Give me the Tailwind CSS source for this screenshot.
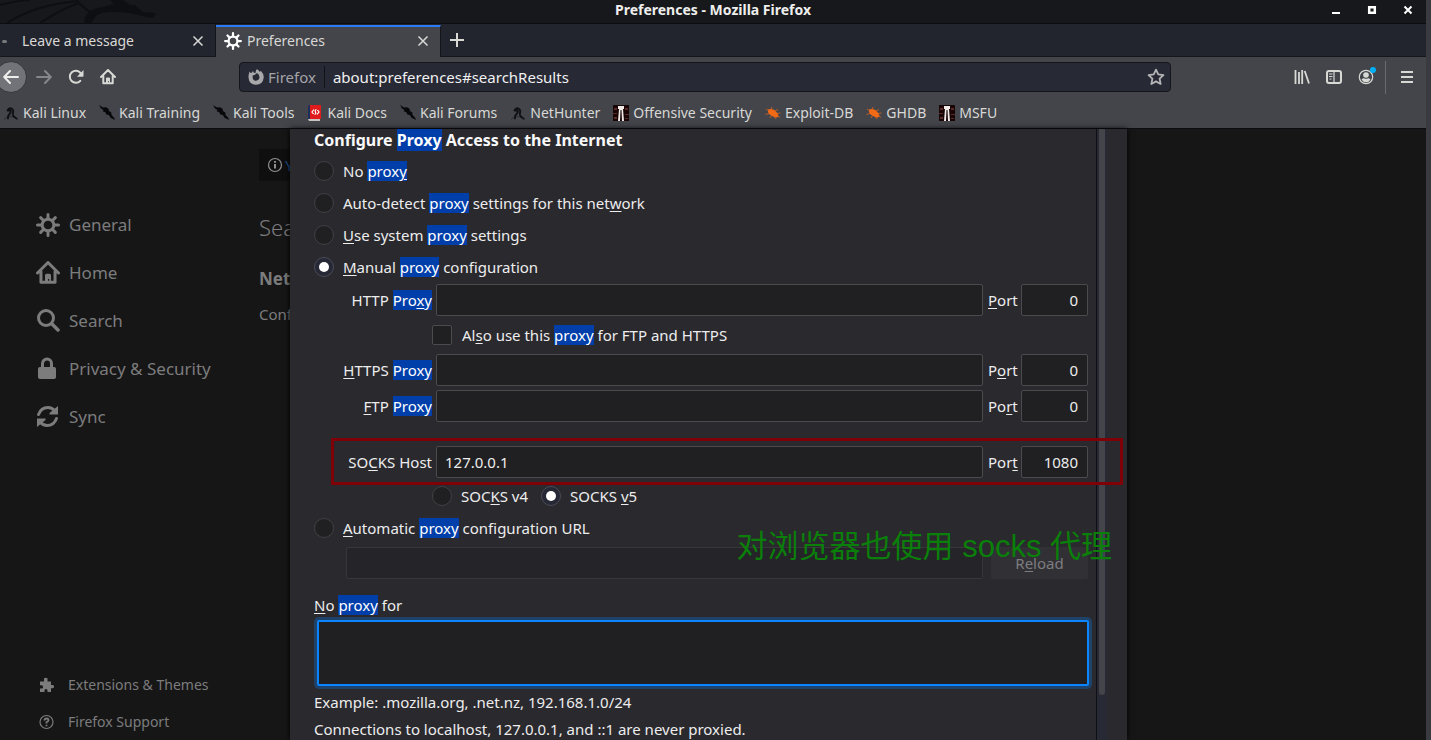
<!DOCTYPE html>
<html lang="en">
<head>
<meta charset="utf-8">
<title>Preferences - Mozilla Firefox</title>
<script src="https://cdn.jsdelivr.net/npm/@tailwindcss/browser@4"></script>
</head>
<body class="bg-[#161617]">
<svg class="hidden">
  <symbol id="gear" viewBox="0 0 16 16"><g fill="none" stroke="currentColor" stroke-linecap="round"><circle cx="8" cy="8" r="3.900" stroke-width="2"/><path stroke-width="2" d="M8 3.500V1M8 12.500V15M3.500 8H1M12.500 8H15M4.800 4.800L3.100 3.100M11.200 11.200l1.700 1.700M4.800 11.200l-1.700 1.700M11.200 4.800l1.700-1.700"/></g></symbol>
  <symbol id="home" viewBox="0 0 16 16"><path fill="none" stroke="currentColor" stroke-width="2" stroke-linecap="round" stroke-linejoin="round" d="M1 8l7-7 7 7M3.300 7v7.200h9.400V7"/><path fill="currentColor" d="M6 14V9.500a1 1 0 0 1 1-1h2a1 1 0 0 1 1 1V14H8.800v-2H8v2z"/></symbol>
  <symbol id="dragon" viewBox="0 0 16 16"><path fill="#08080a" d="M0 0l4 2.500 3-.3 2.500 1.600.5 2.200 2.300 1.500.3 2.500 2.400 2.500L16 15l-2.500-1.200-2-1-1.700-2.800-2.500-.5-1-2.300-2.600-1L4.500 5 2 3.500z"/></symbol>
  <symbol id="kali" viewBox="0 0 16 16"><path fill="none" stroke="#2b2d32" d="M1 14.500Q4 11 8 11.500t7 3"/><path fill="none" stroke="#0f1013" stroke-width="1.800" stroke-linecap="round" d="M4.500 5.500Q6 2.500 8.500 3.500q2.500 1.500 1.500 4.500t3.500 5.500M5 5.500l2.500 0Q8.500 7 6.500 9T5 13.500"/></symbol>
  <symbol id="offsec" viewBox="0 0 16 16"><path fill="#180606" d="M0 0h16v16H0z"/><path fill="#5b2925" d="M1 3h3v2H1zM12 3h3v2h-3zM0 8h4v1H0zM12 9h4v1h-4zM1 12h3v2H1zM12 13h3v1h-3z"/><path fill="#f0eae7" d="M5 1h6v3h-1l1 12H9L8.500 5h-1L7 16H5l1-12H5z"/></symbol>
  <symbol id="bug" viewBox="0 0 16 16"><path fill="#f26a16" d="M3 4.500L5.500 4l3 .5 2 1.500 2 2.200 1 2.800-1.500 1.500-2.500-.2L7 11 4.500 9.500 3 7z"/><path fill="none" stroke="#d9641c" stroke-width=".8" d="M4 6L1 4M6 4.500L7 2M4 8.500l-3.500 1M6.500 10.500L5 13M10 6l3-1.500M12 8.500l3.500-.5M9.500 12l1.500 2M13 11l2 1.500"/></symbol>
  <symbol id="close" viewBox="0 0 12 12"><path fill="none" stroke="currentColor" stroke-width="1.500" d="M1.500 1.500l9 9M10.500 1.500l-9 9"/></symbol>
</svg>

<div class="relative flex h-screen flex-col overflow-hidden border-r-[5px] border-[#3a3b41] font-['Noto_Sans',sans-serif] text-[14px] leading-5 text-[#d8d8d5]">

  <!-- Title bar -->
  <header class="relative h-6 shrink-0 border-b border-[#0c0d10] bg-[#17181c]">
    <svg class="absolute top-0 left-0 h-[23px] w-[156px]" viewBox="0 0 156 23" fill="none" stroke="#0e0f12" stroke-width="2"><path d="M7 23Q35 5 78 1M40 23Q65 7 80 3M0 5Q20 0 30 0M76 0Q84 8 90 12"/><path fill="#0e0f12" stroke="none" d="M84 23Q85 10 98 8Q108 6 114 4L110 0h13l7 5 5 0 8 7 13 1-3 5-11-2-12-3-16-1Q95 11 92 23z"/></svg>
    <h1 class="text-center font-bold text-[#eeeeec]">Preferences - Mozilla Firefox</h1>
    <div class="absolute top-0 right-3 flex h-[19px] items-center gap-6 text-white">
      <button aria-label="Minimize" class="size-3"><svg class="size-3" viewBox="0 0 12 12"><path fill="currentColor" d="M2 8h8v2H2z"/></svg></button>
      <button aria-label="Maximize" class="size-3"><svg class="size-3" viewBox="0 0 12 12"><path fill="none" stroke="currentColor" stroke-width="2.500" d="M3.200 3.200h5.600v5.600H3.200z"/></svg></button>
      <button aria-label="Close" class="size-3"><svg class="size-3" viewBox="0 0 12 12"><path fill="none" stroke="currentColor" stroke-width="2" d="M2.500 2.500l7 7M9.500 2.500l-7 7"/></svg></button>
    </div>
  </header>

  <!-- Tabs -->
  <nav class="flex h-[33px] shrink-0 border-b border-[#15161b] bg-[#23252e]">
    <div class="flex w-[216px] items-center border-r border-[#15161b] pt-[2px] pr-[11px] pl-[2px]">
      <span class="h-[3px] w-[5px] rounded-full bg-[#77787c]"></span>
      <span class="ml-[15px] flex-1">Leave a message</span>
      <button aria-label="Close tab"><svg class="size-3"><use href="#close"/></svg></button>
    </div>
    <div class="mt-px -mb-px flex w-[225px] items-center border-t-2 border-r border-t-[#2a7bf5] border-r-[#15161b] bg-[#43454b] pr-[11px] pb-[2px] pl-2">
      <svg class="size-[18px] text-white"><use href="#gear"/></svg>
      <span class="ml-[5px] flex-1">Preferences</span>
      <button aria-label="Close tab"><svg class="size-3"><use href="#close"/></svg></button>
    </div>
    <button aria-label="New tab" class="px-2"><svg class="size-4" viewBox="0 0 16 16"><path fill="none" stroke="currentColor" stroke-width="2" d="M8 1v14M1 8h14"/></svg></button>
  </nav>

  <!-- Toolbar -->
  <div class="flex h-10 shrink-0 items-center bg-[#43454b]">
    <button aria-label="Back" class="-ml-[5px] grid size-8 shrink-0 place-items-center rounded-full border border-[#34353a] bg-[#727378] text-[#eeeeec]"><svg class="size-4" viewBox="0 0 16 16" fill="none" stroke="currentColor" stroke-width="2" stroke-linecap="round" stroke-linejoin="round"><path d="M15 8H1.500M7 2L1.200 8 7 14"/></svg></button>
    <button aria-label="Forward" class="ml-[9px] text-[#85868a]"><svg class="size-4" viewBox="0 0 16 16" fill="none" stroke="currentColor" stroke-width="2" stroke-linecap="round" stroke-linejoin="round"><path d="M1 8h13.500M9 2l5.800 6L9 14"/></svg></button>
    <button aria-label="Reload" class="ml-4"><svg class="size-4" viewBox="0 0 16 16"><path fill="none" stroke="currentColor" stroke-width="2" stroke-linecap="round" d="M12.300 11.800A6 6 0 1 1 12.500 4"/><path fill="currentColor" d="M15.500 1v6a.7.700 0 0 1-.7.700H9z"/></svg></button>
    <button aria-label="Home" class="ml-4"><svg class="size-4"><use href="#home"/></svg></button>
    <div class="ml-[123px] flex h-[30px] w-[932px] min-w-0 items-center rounded-[4px] border border-[#15161b] bg-[#272935] px-2 text-[15px]">
      <svg class="size-4 shrink-0" viewBox="0 0 16 16"><path fill="#a9a9ac" fill-rule="evenodd" d="M1.500 2.500Q2.500 4 3.500 4L5 2l1 2 2-.500Q7 2 9 .300q2 .500 2.500 2.500l1.500-.800Q16 5 15.700 8.500 15 15.500 8 15.800 1 15.500.500 8.500q0-3 1-6zM9 4Q7 6 4.700 6.500 4 11.500 8 11.700q3.500-.500 3.500-3.700Q11 5 9 4z"/></svg>
      <span class="ml-1 text-[#a4a4a8]">Firefox</span>
      <span class="mx-2 h-[22px] w-px bg-[#111217]"></span>
      <input aria-label="Address" class="min-w-0 flex-1 bg-transparent text-[#f0f0f0] outline-none" value="about:preferences#searchResults">
      <button aria-label="Bookmark this page" class="-mr-[3px] text-[#b4b4b7]"><svg class="size-[18px]" viewBox="0 0 16 16"><path fill="none" stroke="currentColor" stroke-width="1.600" stroke-linejoin="round" d="M8 1.500l2 4.200 4.600.6-3.400 3.200.9 4.700L8 11.900l-4.100 2.300.9-4.700L1.400 6.300 6 5.700z"/></svg></button>
    </div>
    <div class="ml-auto flex items-center pr-[11px]">
      <button aria-label="Library"><svg class="size-4" viewBox="0 0 16 16" fill="none" stroke="currentColor" stroke-width="1.800"><path d="M1.500 1v14M5 3v12M8.200 1v14M10.700 2l4.300 12.500"/></svg></button>
      <button aria-label="Sidebars" class="ml-4"><svg class="size-4" viewBox="0 0 16 16" fill="none" stroke="currentColor"><rect x="1" y="2" width="14" height="12" rx="2" stroke-width="2"/><path stroke-width="1.200" d="M8 2v12M3 5h3.500M3 7.500h3.500M3.500 10h2"/></svg></button>
      <button aria-label="Account" class="relative ml-4"><svg class="size-4" viewBox="0 0 16 16"><circle cx="8" cy="8" r="6.700" fill="none" stroke="currentColor" stroke-width="1.200"/><circle cx="8" cy="6" r="2.800" fill="currentColor"/><path fill="currentColor" d="M3.500 10.500Q5 9 6 9.200q2 1 4 0 1-.200 2.500 1.300Q11 13.200 8 13.200t-4.500-2.700z"/></svg><span class="absolute -top-[2px] -right-[2px] size-[6px] rounded-full bg-[#00b0f4]"></span></button>
      <span class="mx-[11px] h-[33px] w-px bg-[#696a6f]"></span>
      <button aria-label="Menu" class="ml-[2px]"><svg class="size-4" viewBox="0 0 16 16"><path fill="currentColor" d="M2 2h12v2H2zM2 7h12v2H2zM2 12h12v2H2z"/></svg></button>
    </div>
  </div>

  <!-- Bookmarks -->
  <nav class="flex h-8 shrink-0 items-center gap-[13px] border-b border-[#0d0d11] bg-[#43454b] pl-[3px] whitespace-nowrap">
    <a href="#" class="flex items-center gap-1"><svg class="size-4"><use href="#kali"/></svg>Kali Linux</a>
    <a href="#" class="flex items-center gap-1"><svg class="size-4"><use href="#dragon"/></svg>Kali Training</a>
    <a href="#" class="flex items-center gap-1"><svg class="size-4"><use href="#dragon"/></svg>Kali Tools</a>
    <a href="#" class="flex items-center gap-1"><svg class="size-4" viewBox="0 0 16 16"><path fill="#e01b1b" d="M3 0h11v14H3z"/><path fill="#1d2d5c" d="M1 1l2-1v14H1z"/><path fill="#c9c4c0" d="M1 14h12v2H2z"/><path fill="none" stroke="#fff" stroke-width="1.200" d="M7 4.500L5 7q0 1.500 2 1.500M10 9.500l2-2.500q0-1.500-2-1.500M9.500 4.500Q7.500 5 8.500 7T7.500 9.500"/></svg>Kali Docs</a>
    <a href="#" class="flex items-center gap-1"><svg class="size-4"><use href="#dragon"/></svg>Kali Forums</a>
    <a href="#" class="flex items-center gap-1"><svg class="size-4"><use href="#kali"/></svg>NetHunter</a>
    <a href="#" class="flex items-center gap-1"><svg class="size-4"><use href="#offsec"/></svg>Offensive Security</a>
    <a href="#" class="flex items-center gap-1"><svg class="size-4"><use href="#bug"/></svg>Exploit-DB</a>
    <a href="#" class="flex items-center gap-1"><svg class="size-4"><use href="#bug"/></svg>GHDB</a>
    <a href="#" class="flex items-center gap-1"><svg class="size-4"><use href="#offsec"/></svg>MSFU</a>
  </nav>

  <!-- Page -->
  <main class="relative flex min-h-0 flex-1 bg-[#161617] text-[#7c7c7d]">
    <aside class="flex w-[259px] shrink-0 flex-col pt-[72px] pb-2 pl-9">
      <nav class="flex flex-col text-[17px] leading-6">
        <a href="#" class="flex h-12 items-center gap-[9px]"><svg class="size-6"><use href="#gear"/></svg>General</a>
        <a href="#" class="flex h-12 items-center gap-[9px]"><svg class="size-6"><use href="#home"/></svg>Home</a>
        <a href="#" class="flex h-12 items-center gap-[9px]"><svg class="size-6" viewBox="0 0 24 24" fill="none" stroke="currentColor" stroke-linecap="round"><circle cx="10" cy="9" r="7.500" stroke-width="3"/><path stroke-width="3.500" d="M16 15l6 6"/></svg>Search</a>
        <a href="#" class="flex h-12 items-center gap-[9px]"><svg class="size-6" viewBox="0 0 24 24"><rect x="2" y="10" width="18" height="12" rx="2" fill="currentColor"/><path fill="none" stroke="currentColor" stroke-width="3" d="M6.500 11V6.500a4.500 4.500 0 0 1 9 0V11"/></svg>Privacy &amp; Security</a>
        <a href="#" class="flex h-12 items-center gap-[9px]"><svg class="size-6" viewBox="0 0 24 24"><path fill="none" stroke="currentColor" stroke-width="3" stroke-linecap="round" d="M2.500 9.500Q5 2.500 12 2.500q4 0 7 3.500M20.500 13.500Q18 20.500 11 20.500q-4 0-7-3.500"/><path fill="currentColor" d="M22 1v8.500h-8.500v-1.500zM1 22v-8.500h8.500v1.500z"/></svg>Sync</a>
      </nav>
      <nav class="mt-auto flex flex-col gap-[17px] pl-[3px]">
        <a href="#" class="flex items-center gap-[13px]"><svg class="size-4" viewBox="0 0 16 16"><path fill="currentColor" d="M1 4.500h4V3a1.800 1.800 0 1 1 3.500 0v1.500H12V8h1.500a1.600 1.600 0 1 1 0 3.200H12V15H8.500v-1.500a1.500 1.500 0 0 0-3 0V15H1v-3.500h1.500a1.600 1.600 0 0 0 0-3.200H1z"/></svg>Extensions &amp; Themes</a>
        <a href="#" class="flex items-center gap-[13px]"><svg class="size-4" viewBox="0 0 16 16" fill="none" stroke="currentColor"><circle cx="7.500" cy="8" r="6.500" stroke-width="1.200"/><path stroke-width="1.800" d="M5.500 6.500q0-2 2-2t2 1.800q0 1-2 2v1.200M7.500 10.700v1.600"/></svg>Firefox Support</a>
      </nav>
    </aside>
    <section class="w-[31px] overflow-hidden pt-5 text-[15px] whitespace-nowrap">
      <div class="flex h-8 items-center gap-[2px] bg-[#0f0f10] pl-2"><svg class="size-4 shrink-0" viewBox="0 0 16 16" fill="none" stroke="#8f8f90"><circle cx="8" cy="8" r="6.500" stroke-width="1.200"/><path stroke-width="2" d="M8 7v4.500M8 4v1.800"/></svg><a href="#" class="text-[#1c4f86]">Your</a></div>
      <h2 class="mt-8 text-[22px] leading-7 font-light">Search</h2>
      <h3 class="mt-[26px] text-[17px] leading-6 font-bold">Network</h3>
      <p class="mt-[13px]">Configure</p>
    </section>

    <!-- Connection settings dialog -->
    <form class="absolute inset-y-0 right-[299px] left-[290px] flex bg-[#2a292e] pr-5 pl-6 text-[15px] text-[#ededed] shadow-[0_0_6px_#000]">
      <div class="flex-1 pr-2">
        <h2 class="pt-px text-[16px] font-bold text-[#f9f9fa]">Configure <mark class="bg-[#003eaa] text-white">Proxy</mark> Access to the Internet</h2>
        <div class="mt-[11px] flex flex-col gap-3">
          <label class="flex gap-[9px]"><input type="radio" name="mode" class="grid size-5 appearance-none place-items-center rounded-full border border-[#414145] bg-[#202022]"><span>No <mark class="bg-[#003eaa] text-white">prox<u class="underline-offset-2">y</u></mark></span></label>
          <label class="flex gap-[9px]"><input type="radio" name="mode" class="grid size-5 appearance-none place-items-center rounded-full border border-[#414145] bg-[#202022]"><span>Auto-detect <mark class="bg-[#003eaa] text-white">proxy</mark> settings for this net<u class="underline-offset-2">w</u>ork</span></label>
          <label class="flex gap-[9px]"><input type="radio" name="mode" class="grid size-5 appearance-none place-items-center rounded-full border border-[#414145] bg-[#202022]"><span><u class="underline-offset-2">U</u>se system <mark class="bg-[#003eaa] text-white">proxy</mark> settings</span></label>
          <label class="flex gap-[9px]"><input type="radio" name="mode" checked class="grid size-5 appearance-none place-items-center rounded-full border border-[#4a4b57] bg-[#262836] before:size-[10px] before:rounded-full before:bg-white before:content-['']"><span><u class="underline-offset-2">M</u>anual <mark class="bg-[#003eaa] text-white">proxy</mark> configuration</span></label>
        </div>

        <div class="mt-[7px] flex items-center">
          <label for="http" class="w-[118px] text-right">HTTP <mark class="bg-[#003eaa] text-white">Pro<u class="underline-offset-2">x</u>y</mark></label>
          <input id="http" class="ml-1 h-8 min-w-0 flex-1 rounded-[2px] border border-[#4b4b4e] bg-[#202022] px-2">
          <label for="httpport" class="w-[38px] pl-[5px]"><u class="underline-offset-2">P</u>ort</label>
          <input id="httpport" value="0" class="h-8 w-[67px] rounded-[2px] border border-[#4b4b4e] bg-[#202022] px-[9px] text-right">
        </div>
        <label class="mt-[9px] ml-[118px] flex gap-[10px]"><input type="checkbox" class="size-5 appearance-none rounded-[2px] border border-[#4b4b4e] bg-[#202022]"><span>Al<u class="underline-offset-2">s</u>o use this <mark class="bg-[#003eaa] text-white">proxy</mark> for FTP and HTTPS</span></label>
        <div class="mt-[9px] flex items-center">
          <label for="https" class="w-[118px] text-right"><u class="underline-offset-2">H</u>TTPS <mark class="bg-[#003eaa] text-white">Proxy</mark></label>
          <input id="https" class="ml-1 h-8 min-w-0 flex-1 rounded-[2px] border border-[#4b4b4e] bg-[#202022] px-2">
          <label for="httpsport" class="w-[38px] pl-[5px]">P<u class="underline-offset-2">o</u>rt</label>
          <input id="httpsport" value="0" class="h-8 w-[67px] rounded-[2px] border border-[#4b4b4e] bg-[#202022] px-[9px] text-right">
        </div>
        <div class="mt-1 flex items-center">
          <label for="ftp" class="w-[118px] text-right"><u class="underline-offset-2">F</u>TP <mark class="bg-[#003eaa] text-white">Proxy</mark></label>
          <input id="ftp" class="ml-1 h-8 min-w-0 flex-1 rounded-[2px] border border-[#4b4b4e] bg-[#202022] px-2">
          <label for="ftpport" class="w-[38px] pl-[5px]">Po<u class="underline-offset-2">r</u>t</label>
          <input id="ftpport" value="0" class="h-8 w-[67px] rounded-[2px] border border-[#4b4b4e] bg-[#202022] px-[9px] text-right">
        </div>
        <div class="relative mt-6 flex items-center">
          <label for="socks" class="w-[118px] text-right">SO<u class="underline-offset-2">C</u>KS Host</label>
          <input id="socks" value="127.0.0.1" class="ml-1 h-8 min-w-0 flex-1 rounded-[2px] border border-[#4b4b4e] bg-[#202022] px-2">
          <label for="socksport" class="w-[38px] pl-[5px]">Por<u class="underline-offset-2">t</u></label>
          <input id="socksport" value="1080" class="h-8 w-[67px] rounded-[2px] border border-[#4b4b4e] bg-[#202022] px-[9px] text-right">
          <div class="pointer-events-none absolute -top-2 -right-[35px] -bottom-[7px] left-[17px] z-10 border-[3px] border-[#800008]"></div>
        </div>
        <div class="mt-2 ml-[118px] flex gap-[13px]">
          <label class="flex gap-[9px]"><input type="radio" name="ver" class="grid size-5 appearance-none place-items-center rounded-full border border-[#414145] bg-[#202022]"><span>SOC<u class="underline-offset-2">K</u>S v4</span></label>
          <label class="flex gap-[9px]"><input type="radio" name="ver" checked class="grid size-5 appearance-none place-items-center rounded-full border border-[#4a4b57] bg-[#262836] before:size-[10px] before:rounded-full before:bg-white before:content-['']"><span>SOCKS <u class="underline-offset-2">v</u>5</span></label>
        </div>
        <label class="mt-3 flex gap-[9px]"><input type="radio" name="mode" class="grid size-5 appearance-none place-items-center rounded-full border border-[#414145] bg-[#202022]"><span><u class="underline-offset-2">A</u>utomatic <mark class="bg-[#003eaa] text-white">proxy</mark> configuration URL</span></label>
        <div class="relative mt-[9px] ml-8 flex gap-2">
          <input aria-label="Automatic proxy configuration URL" disabled class="h-8 min-w-0 flex-1 rounded-[2px] border border-[#37373a] bg-[#252428] px-2">
          <button type="button" disabled class="h-8 w-[97px] rounded-[2px] bg-[#313035] text-[#7d7d80]">R<u class="underline-offset-2">e</u>load</button>
          <p class="pointer-events-none absolute -top-5 -right-6 z-10 font-['Liberation_Sans','Noto_Sans_CJK_SC',sans-serif] text-[31px] leading-10 whitespace-nowrap text-[#0a7f0a]" lang="zh-CN">对浏览器也使用 socks 代理</p>
        </div>
        <label for="noproxy" class="mt-4 block"><u class="underline-offset-2">N</u>o <mark class="bg-[#003eaa] text-white">proxy</mark> for</label>
        <div class="mt-[5px] -mr-px pl-[3px]"><textarea id="noproxy" class="block h-[66px] w-full resize-none rounded-[2px] border-2 border-[#0a84ff] bg-[#202022] px-2 ring-3 ring-[#1f4268] outline-none"></textarea></div>
        <p class="mt-[6px]">Example: .mozilla.org, .net.nz, 192.168.1.0/24</p>
        <p class="mt-[7px]">Connections to localhost, 127.0.0.1, and ::1 are never proxied.</p>
      </div>
      <div class="w-[11px] border-l border-[#0e0f13] bg-[#272935] pl-[2px]"><div class="h-[566px] w-[6px] rounded-b-full bg-[#43454b]"></div></div>
    </form>
  </main>
</div>
</body>
</html>
